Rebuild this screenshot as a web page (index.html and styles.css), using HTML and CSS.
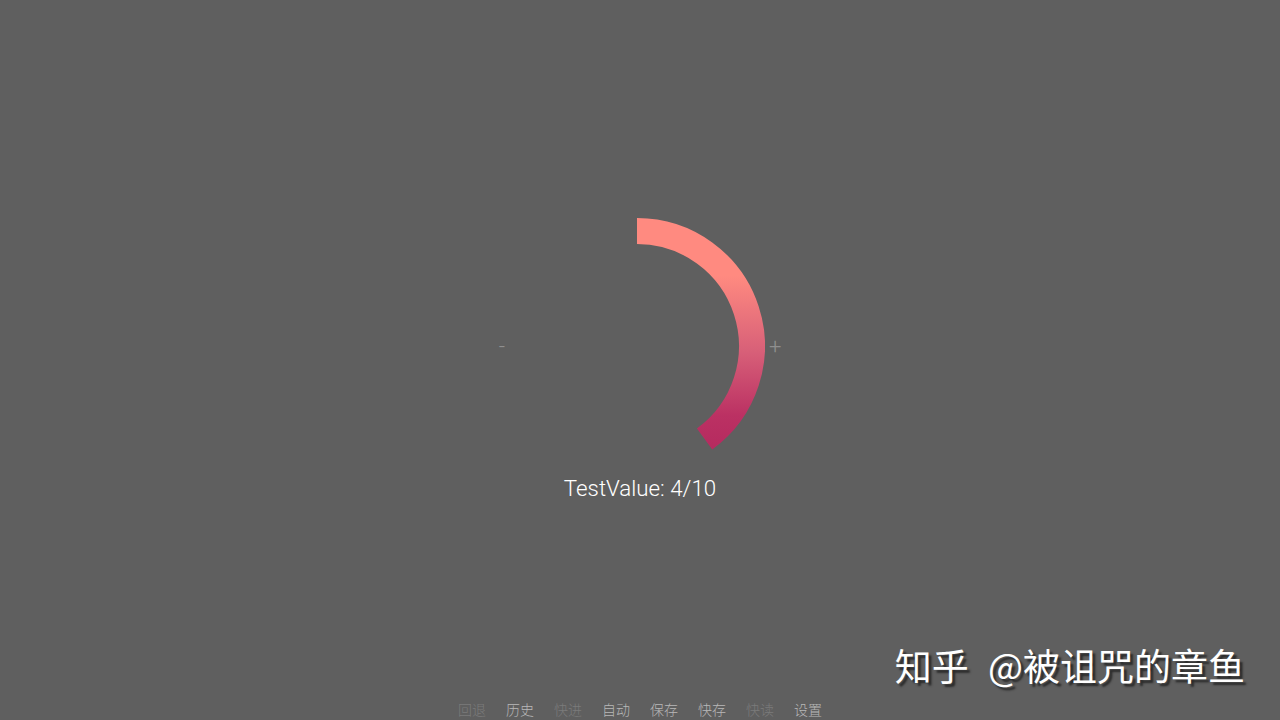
FILE: index.html
```html
<!DOCTYPE html>
<html lang="en">
<head>
    <meta charset="UTF-8">
    <meta name="viewport" content="width=device-width, initial-scale=1.0">
    <title>TestValue</title>
    <link rel="stylesheet" href="styles.css">
</head>
<body>
    <div class="stage">
        <div class="knob-row">
            <span class="knob-btn">-</span>
            <svg class="knob" width="256" height="256" viewBox="0 0 256 256">
                <defs>
                    <linearGradient id="arcFill" gradientUnits="userSpaceOnUse" x1="0" y1="0" x2="0" y2="232">
                        <stop offset="0" stop-color="#ff8a80"/>
                        <stop offset="0.25" stop-color="#ff8a80"/>
                        <stop offset="0.58" stop-color="#d75f78"/>
                        <stop offset="0.85" stop-color="#bb3163"/>
                        <stop offset="1" stop-color="#b52a5f"/>
                    </linearGradient>
                </defs>
                <!-- 4/10 of the circle: 144 degrees clockwise from the top -->
                <path d="M128 13 A115 115 0 0 1 195.6 221" fill="none" stroke="url(#arcFill)" stroke-width="26"/>
            </svg>
            <span class="knob-btn">+</span>
        </div>
        <div class="value-label">TestValue: 4/10</div>
    </div>

    <nav class="quick-menu">
        <span class="quick-item disabled">回退</span>
        <span class="quick-item">历史</span>
        <span class="quick-item disabled">快进</span>
        <span class="quick-item">自动</span>
        <span class="quick-item">保存</span>
        <span class="quick-item">快存</span>
        <span class="quick-item disabled">快读</span>
        <span class="quick-item">设置</span>
    </nav>

    <div class="watermark">知乎 @被诅咒的章鱼</div>
</body>
</html>
```

FILE: styles.css
```css
body {
    margin: 0;
    height: 720px;
    overflow: hidden;
    position: relative;
    background: #5f5f5f;
    color: white;
    font-family: Roboto, "Noto Sans CJK SC", sans-serif;
    display: flex;
    align-items: center;
    justify-content: center;
}

.stage {
    display: flex;
    flex-direction: column;
    align-items: center;
}

.knob-row {
    display: flex;
    align-items: center;
}

.knob {
    display: block;
}

.knob-btn {
    padding: 0 4px;
    font-size: 22px;
    font-weight: 300;
    color: #8f8f8f;
}

.value-label {
    font-size: 22.3px;
    font-weight: 300;
    line-height: 28px;
    color: #ffffff;
}

.quick-menu {
    position: absolute;
    left: 0;
    right: 0;
    bottom: 0;
    display: flex;
    justify-content: center;
    gap: 20px;
    font-size: 14px;
    line-height: 20px;
    font-weight: 300;
}

.quick-item {
    color: #b8b8b8;
}

.quick-item.disabled {
    color: #7b7b7b;
}

.watermark {
    position: absolute;
    right: 35px;
    bottom: 30px;
    font-family: "Noto Sans CJK SC", sans-serif;
    font-size: 37px;
    line-height: 50px;
    color: #ffffff;
    white-space: nowrap;
    word-spacing: 11px;
    text-shadow: 3px 3px 2px #2a2a2a;
}
```
